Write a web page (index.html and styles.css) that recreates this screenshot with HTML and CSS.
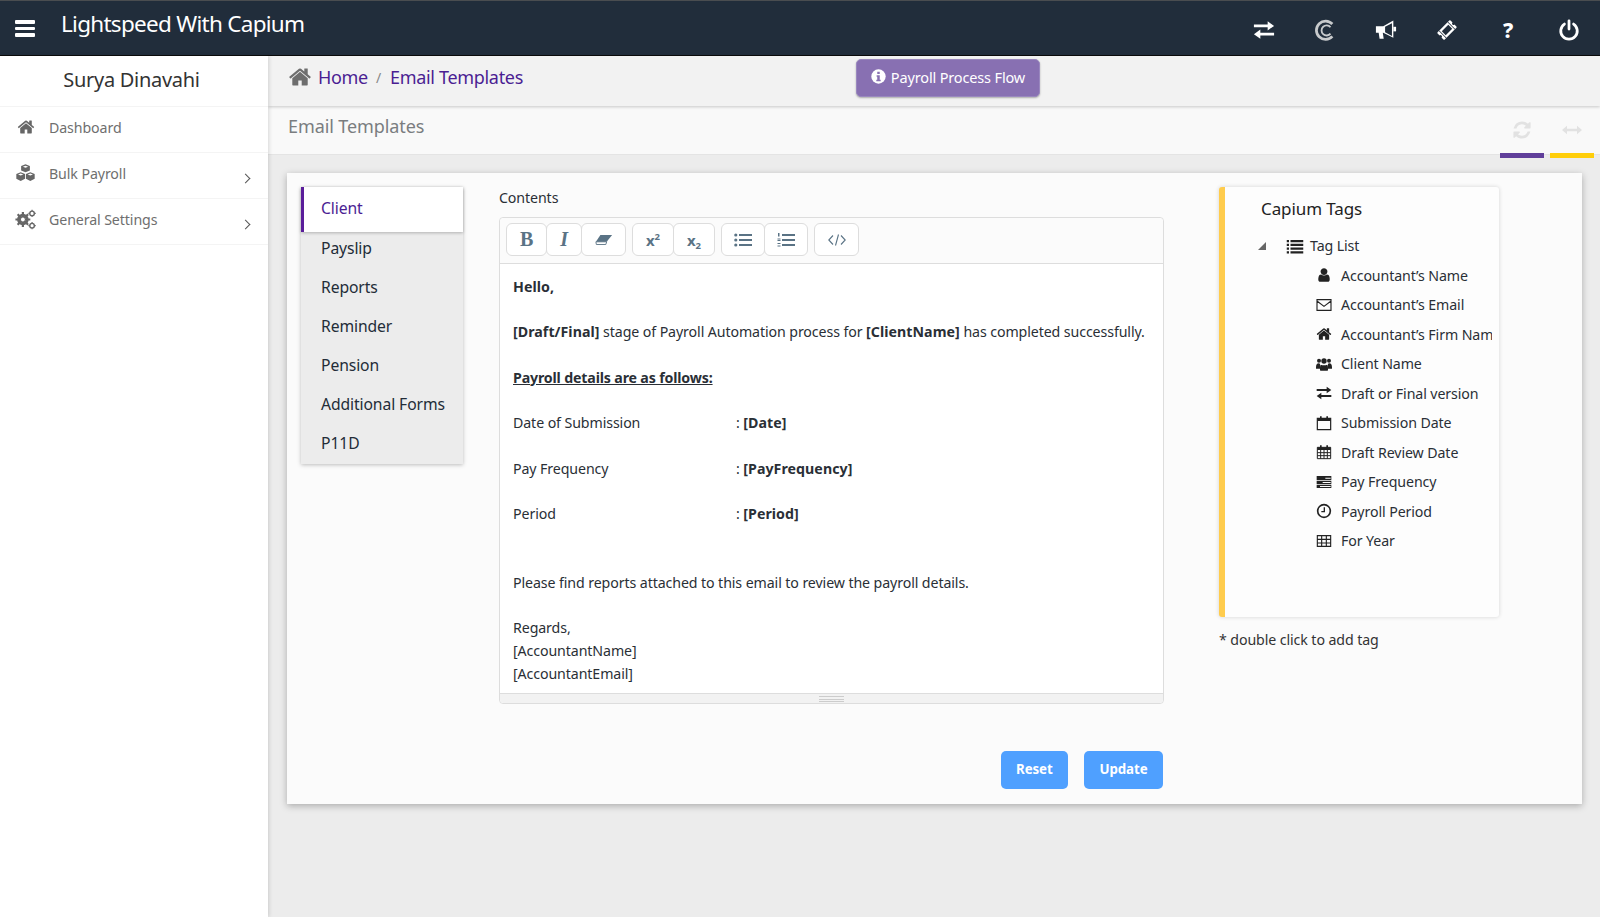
FILE: index.html
```html
<!DOCTYPE html>
<html lang="en">
<head>
<meta charset="utf-8">
<title>Email Templates</title>
<link rel="stylesheet" href="styles.css">
</head>
<body>
<svg class="sprite" xmlns="http://www.w3.org/2000/svg">
  <symbol id="home" viewBox="0 0 1792 1792"><path d="M1472 992v480q0 26-19 45t-45 19h-384v-384h-256v384h-384q-26 0-45-19t-19-45v-480q0-1 .5-3t.5-3l575-474 575 474q1 2 1 6zm223-69l-62 74q-8 9-21 11h-3q-13 0-21-7l-692-577-692 577q-12 8-24 7-13-2-21-11l-62-74q-8-10-7-23.500t11-21.500l719-599q32-26 76-26t76 26l244 204v-195q0-14 9-23t23-9h192q14 0 23 9t9 23v408l219 182q10 8 11 21.500t-7 23.500z"/></symbol>
  <symbol id="user" viewBox="0 0 1792 1792"><path d="M1536 1399q0 109-62.500 187t-150.500 78h-854q-88 0-150.500-78t-62.500-187q0-85 8.500-160.500t31.500-152 58.500-131 94-89 134.500-34.500q131 128 313 128t313-128q76 0 134.500 34.500t94 89 58.500 131 31.500 152 8.500 160.500zm-256-887q0 159-112.500 271.500t-271.500 112.500-271.500-112.500-112.500-271.500 112.500-271.500 271.500-112.500 271.500 112.500 112.500 271.500z"/></symbol>
  <symbol id="refresh" viewBox="0 0 1792 1792"><path d="M1639 1056q0 5-1 7-64 268-268 434.500t-478 166.500q-146 0-282.500-55t-243.500-157l-129 129q-19 19-45 19t-45-19-19-45v-448q0-26 19-45t45-19h448q26 0 45 19t19 45-19 45l-137 137q71 66 161 102t187 36q134 0 250-65t186-179q11-17 53-117 8-23 30-23h192q13 0 22.500 9.500t9.500 22.500zm25-800v448q0 26-19 45t-45 19h-448q-26 0-45-19t-19-45 19-45l138-138q-148-137-349-137-134 0-250 65t-186 179q-11 17-53 117-8 23-30 23h-199q-13 0-22.500-9.500t-9.500-22.500v-7q65-268 270-434.500t480-166.500q146 0 284 55.500t245 156.500l130-129q19-19 45-19t45 19 19 45z"/></symbol>
  <symbol id="exchange" viewBox="0 0 24 24"><path d="M1 6h15V2.500l7 5-7 5V9H1zM23 15H8v-3.500l-7 5 7 5V18h15z"/></symbol>
  <symbol id="cubes" viewBox="0 0 24 24"><path d="M12 1.500l5 2v5l-5 2-5-2v-5zM6.500 10.500l5 2v5.500l-5 2.500-5-2.500V12.500zM17.500 10.500l5 2v5.500l-5 2.500-5-2.500V12.500z"/><path fill="#fff" d="M12 3l3 1.200-3 1.200-3-1.200zM6.500 12l3 1.200-3 1.200-3-1.200zM17.500 12l3 1.200-3 1.200-3-1.200z"/></symbol>
  <symbol id="cogs" viewBox="0 0 24 24"><circle cx="9" cy="12" r="5" fill="none" stroke="currentColor" stroke-width="3.200"/><path stroke="currentColor" stroke-width="2.500" d="M9 3.500v17M.5 12h17M3 6l12 12M15 6L3 18"/><circle cx="9" cy="12" r="2.200" fill="#fff"/><circle cx="19.500" cy="5" r="2.600" fill="none" stroke="currentColor" stroke-width="1.600"/><path stroke="currentColor" stroke-width="1.300" d="M19.500 .8v1.500M19.500 7.700v1.500M15.300 5h1.500M22.200 5h1.500"/><circle cx="19.500" cy="19" r="2.600" fill="none" stroke="currentColor" stroke-width="1.600"/><path stroke="currentColor" stroke-width="1.300" d="M19.500 14.800v1.500M19.500 21.700v1.500M15.300 19h1.500M22.200 19h1.500"/></symbol>
  <symbol id="list" viewBox="0 0 24 24"><path d="M1 4h3v3H1zM6 4h17v3H6zM1 9h3v3H1zM6 9h17v3H6zM1 14h3v3H1zM6 14h17v3H6zM1 19h3v3H1zM6 19h17v3H6z"/></symbol>
</svg>

<header class="topbar">
  <div class="brand">
    <span class="burger"><i></i><i></i><i></i></span>
    <span class="brand-name">Lightspeed With Capium</span>
  </div>
  <nav class="top-icons">
    <svg class="ti" viewBox="0 0 24 24"><use href="#exchange"/></svg>
    <svg class="ti" viewBox="0 0 24 24"><path fill="none" stroke="#c8cacc" stroke-width="3" d="M20 5.500A10 10 0 1 0 20 19"/><path fill="none" stroke="#c8cacc" stroke-width="2" d="M18 9a5.500 5.500 0 1 0 0 7"/></svg>
    <svg class="ti" viewBox="0 0 24 24"><path d="M1 8h8l11-6.500v19L9 15H8.500l1 6.500H5L4 15H1z"/><path fill="#212d3b" d="M11 8.500l7.500-4v14l-7.500-4z"/><path d="M20 8.500h3v5h-3z"/></svg>
    <svg class="ti" viewBox="0 0 24 24"><g transform="rotate(-45 12 12)"><rect x="2" y="6.500" width="20" height="11" rx="1" fill="#fff"/><rect x="7" y="9" width="10" height="6" fill="#212d3b"/><circle cx="2" cy="12" r="1.600" fill="#212d3b"/><circle cx="22" cy="12" r="1.600" fill="#212d3b"/><rect x="4.900" y="6.500" width=".8" height="11" fill="#212d3b"/><rect x="18.300" y="6.500" width=".8" height="11" fill="#212d3b"/></g></svg>
    <span class="ti ti-q">?</span>
    <svg class="ti" viewBox="0 0 24 24"><path fill="none" stroke="#fff" stroke-width="3" stroke-linecap="round" d="M7 5.500a9 9 0 1 0 10 0M12 2v9"/></svg>
  </nav>
</header>

<div class="shell">
  <aside class="sidebar">
    <div class="user-name">Surya Dinavahi</div>
    <a class="nav-item"><svg class="nav-ic nav-home"><use href="#home"/></svg><span>Dashboard</span></a>
    <a class="nav-item"><svg class="nav-ic"><use href="#cubes"/></svg><span>Bulk Payroll</span><b class="chev"></b></a>
    <a class="nav-item"><svg class="nav-ic"><use href="#cogs"/></svg><span>General Settings</span><b class="chev"></b></a>
  </aside>

  <main class="main">
    <div class="crumbs">
      <svg class="crumb-home"><use href="#home"/></svg>
      <a class="crumb">Home</a><span class="sep">/</span><a class="crumb">Email Templates</a>
      <button class="flow-btn"><svg class="info" viewBox="0 0 24 24"><circle cx="12" cy="12" r="11.500" fill="#fff"/><path fill="#8870b2" d="M10 4.500h4v3.500h-4zM9 10h5v7h1.500v2.500h-7V17H10v-4.500H9z"/></svg>Payroll Process Flow</button>
    </div>
    <div class="title-bar">
      <h1 class="page-title">Email Templates</h1>
      <div class="tools">
        <div class="tool"><svg class="tool-ic"><use href="#refresh"/></svg><i class="tool-bar purple"></i></div>
        <div class="tool"><svg class="tool-ic" viewBox="0 0 24 24"><path d="M0 12l6-5v3.500h12V7l6 5-6 5v-3.500H6V17z"/></svg><i class="tool-bar yellow"></i></div>
      </div>
    </div>

    <section class="card">
      <ul class="tabs">
        <li class="tab active">Client</li>
        <li class="tab">Payslip</li>
        <li class="tab">Reports</li>
        <li class="tab">Reminder</li>
        <li class="tab">Pension</li>
        <li class="tab">Additional Forms</li>
        <li class="tab">P11D</li>
      </ul>

      <div class="editor-col">
        <label class="contents-label">Contents</label>
        <div class="editor">
          <div class="toolbar">
            <div class="btn-group">
              <button class="tb tb-b">B</button>
              <button class="tb tb-i">I</button>
              <button class="tb tb-e"><svg viewBox="0 0 20 12" class="tb-ic"><path d="M6 .5h13L13 8H1z"/><path fill="none" stroke="currentColor" d="M1 8h12l-1 3H1.500z"/></svg></button>
            </div>
            <div class="btn-group">
              <button class="tb tb-sup">x<sup>2</sup></button>
              <button class="tb tb-sub">x<sub>2</sub></button>
            </div>
            <div class="btn-group">
              <button class="tb tb-ul"><svg viewBox="0 0 18 14" class="tb-ic"><path d="M5 1h13v2H5zM5 6h13v2H5zM5 11h13v2H5z"/><circle cx="1.800" cy="2" r="1.600"/><circle cx="1.800" cy="7" r="1.600"/><circle cx="1.800" cy="12" r="1.600"/></svg></button>
              <button class="tb tb-ol"><svg viewBox="0 0 18 14" class="tb-ic"><path d="M5 1h13v2H5zM5 6h13v2H5zM5 11h13v2H5z"/><path d="M1 0h1.500v3.500H1zM.5 5.500h3v1H.5zM.5 7h3v1h-3zM.5 10h3v1h-3zM.5 12.500h3v1h-3z"/></svg></button>
            </div>
            <div class="btn-group">
              <button class="tb tb-code"><svg viewBox="0 0 18 12" class="tb-ic"><path fill="none" stroke="currentColor" stroke-width="1.100" d="M5 1.500L.8 6 5 10.500M13 1.500L17.200 6 13 10.500M10.500 .5L7.500 11.500"/></svg></button>
            </div>
          </div>
          <div class="editor-body">
            <p class="line"><strong>Hello,</strong></p>
            <p class="line blank"></p>
            <p class="line"><strong>[Draft/Final]</strong> stage of Payroll Automation process for <strong>[ClientName]</strong> has completed successfully.</p>
            <p class="line blank"></p>
            <p class="line"><strong class="tight"><u>Payroll details are as follows:</u></strong></p>
            <p class="line blank"></p>
            <p class="line kv"><span>Date of Submission</span><span>: <strong>[Date]</strong></span></p>
            <p class="line blank"></p>
            <p class="line kv"><span>Pay Frequency</span><span>: <strong>[PayFrequency]</strong></span></p>
            <p class="line blank"></p>
            <p class="line kv"><span>Period</span><span>: <strong>[Period]</strong></span></p>
            <p class="line blank"></p>
            <p class="line blank"></p>
            <p class="line">Please find reports attached to this email to review the payroll details.</p>
            <p class="line blank"></p>
            <p class="line">Regards,</p>
            <p class="line">[AccountantName]</p>
            <p class="line">[AccountantEmail]</p>
          </div>
          <div class="statusbar"><i class="grip"></i></div>
        </div>
        <div class="actions">
          <button class="act">Reset</button>
          <button class="act">Update</button>
        </div>
      </div>

      <div class="tags-col">
        <div class="tags">
          <h2 class="tags-title">Capium Tags</h2>
          <div class="tree-root"><i class="caret"></i><svg class="root-ic"><use href="#list"/></svg><span>Tag List</span></div>
          <ul class="tag-list">
            <li><svg class="tag-ic"><use href="#user"/></svg><span>Accountant’s Name</span></li>
            <li><svg class="tag-ic" viewBox="0 0 24 18"><path fill="none" stroke="currentColor" stroke-width="1.700" d="M1.500 1h21v16h-21zM1.500 3l10.500 8 10.500-8"/></svg><span>Accountant’s Email</span></li>
            <li><svg class="tag-ic"><use href="#home"/></svg><span>Accountant’s Firm Name</span></li>
            <li><svg class="tag-ic" viewBox="0 0 24 24"><circle cx="4.500" cy="7" r="3"/><circle cx="19.500" cy="7" r="3"/><circle cx="12" cy="7.500" r="4"/><path d="M0 17c0-4 1.500-6 4-6l2 .5V19H0zM24 17c0-4-1.500-6-4-6l-2 .5V19h6zM7 13q5 2 10 0 1 1 1 5v3q0 1-1 1H7q-1 0-1-1v-3q0-4 1-5z"/></svg><span>Client Name</span></li>
            <li><svg class="tag-ic" viewBox="0 0 24 24"><use href="#exchange"/></svg><span>Draft or Final version</span></li>
            <li><svg class="tag-ic" viewBox="0 0 24 24"><path fill="none" stroke="currentColor" stroke-width="1.800" d="M2 5h20v17H2z"/><path d="M2 5h20v4H2zM6 2h2.500v5H6zM15.500 2H18v5h-2.500z"/></svg><span>Submission Date</span></li>
            <li><svg class="tag-ic" viewBox="0 0 24 24"><path fill="none" stroke="currentColor" stroke-width="1.500" d="M2 5h20v17H2zM2 13h20M2 17.500h20M7 9v13M12 9v13M17 9v13"/><path d="M2 5h20v4H2zM6 2h2.500v5H6zM15.500 2H18v5h-2.500z"/></svg><span>Draft Review Date</span></li>
            <li><svg class="tag-ic" viewBox="0 0 24 24"><path d="M1 3h22v6H1zM1 10h22v5H1zM1 16h22v5H1z"/><path fill="#fcfcfc" d="M14 5.500h8v1.500h-8zM10 12h12v1.500H10zM6 18h16v1.500H6z"/></svg><span>Pay Frequency</span></li>
            <li><svg class="tag-ic" viewBox="0 0 24 24"><circle cx="12" cy="12" r="9.500" fill="none" stroke="currentColor" stroke-width="2.500"/><path fill="none" stroke="currentColor" stroke-width="2" d="M12.500 6.500V13H8"/></svg><span>Payroll Period</span></li>
            <li><svg class="tag-ic" viewBox="0 0 24 24"><path fill="none" stroke="currentColor" stroke-width="1.700" d="M2 4h20v16H2zM2 9.500h20M2 15h20M8.500 4v16M15.500 4v16"/></svg><span>For Year</span></li>
          </ul>
        </div>
        <p class="hint">* double click to add tag</p>
      </div>
    </section>
  </main>
</div>
</body>
</html>
```
FILE: styles.css
```css
* { box-sizing: border-box; }
html, body { margin: 0; height: 100%; }
body {
  height: 917px;
  overflow: hidden;
  font-family: "Noto Sans", "Open Sans", sans-serif;
  font-size: 14.2px;
  letter-spacing: -.1px;
  color: #2a2f36;
  background: #ececec;
  display: flex;
  flex-direction: column;
}
strong { letter-spacing: .05px; }
strong.tight { letter-spacing: -.16px; }
.sprite { display: none; }
svg { fill: currentColor; display: block; }
ul { list-style: none; margin: 0; padding: 0; }
button { font-family: inherit; letter-spacing: inherit; cursor: pointer; }

/* top bar */
.topbar {
  height: 56px;
  flex: none;
  background: #212d3b;
  border-top: 1px solid #4a4d50;
  border-bottom: 1px solid #0b0b0b;
  display: flex;
  justify-content: space-between;
  color: #fff;
}
.brand { display: flex; align-items: flex-start; }
.burger { width: 20px; margin: 19px 0 0 15px; display: flex; flex-direction: column; gap: 3px; }
.burger i { height: 3.500px; background: #fff; border-radius: 1px; }
.brand-name { margin: 6px 0 0 26px; font-size: 22.500px; line-height: 34px; letter-spacing: -.72px; }
.top-icons { display: flex; gap: 39px; align-items: center; padding: 4px 20px 0 0; }
.ti { width: 22px; height: 22px; color: #fff; }
.ti-q { font-weight: 800; font-size: 21px; line-height: 22px; text-align: center; }

.shell { flex: 1; display: flex; min-height: 0; }

/* sidebar */
.sidebar { width: 268px; flex: none; background: #fff; box-shadow: 1px 0 4px rgba(0,0,0,.14); z-index: 2; }
.user-name { height: 51px; display: flex; align-items: center; justify-content: center; font-size: 20px; color: #333; padding-bottom: 3px; letter-spacing: -.3px; padding-right: 5px; border-bottom: 1px solid #f4f4f4; }
.nav-item { height: 46px; padding: 0 0 5px 15px; display: flex; align-items: center; color: #6f6f6f; border-bottom: 1px solid #f4f4f4; }
.nav-ic { width: 21px; height: 21px; margin-right: 13px; color: #666; }
.nav-home { width: 18px; height: 18px; margin: 0 14px 0 2px; }
.chev { width: 7px; height: 7px; margin-left: auto; margin-right: 19px; margin-top: 10px; border-top: 1.500px solid #555; border-right: 1.500px solid #555; transform: rotate(45deg); }

/* main */
.main { flex: 1; min-width: 0; display: flex; flex-direction: column; }
.crumbs { height: 50px; flex: none; padding: 0 0 8px 20px; background: #f2f2f2; display: flex; align-items: center; box-shadow: 0 1px 3px rgba(0,0,0,.2); position: relative; z-index: 1; }
.crumb-home { width: 24px; height: 24px; color: #6e6e6e; margin-right: 6px; }
.crumb { color: #4b1e93; font-size: 18px; letter-spacing: -.32px; }
.sep { color: #888; margin: 0 9px 0 8px; font-size: 14px; }
.flow-btn { margin-left: 333px; width: 184px; height: 38px; align-self: flex-start; margin-top: 3px; border: 1px solid #9a88bf; border-radius: 5px; background: #8870b2; color: #fff; font-size: 14.500px; letter-spacing: -.15px; display: flex; align-items: center; justify-content: center; gap: 5px; box-shadow: 0 1px 2px rgba(0,0,0,.3); padding: 0 0 3px; }
.info { width: 15px; height: 15px; }

.title-bar { height: 49px; flex: none; background: #f9f9f9; border-bottom: 1px solid #e4e4e4; display: flex; justify-content: space-between; padding-left: 20px; }
.page-title { margin: 0; font-size: 18px; font-weight: 400; line-height: 40px; color: #7a7d80; letter-spacing: -.1px; }
.tools { display: flex; gap: 6px; padding-right: 6px; }
.tool { width: 44px; display: flex; flex-direction: column; align-items: center; }
.tool-ic { width: 20px; height: 20px; margin-top: 14px; color: #e2e2e2; }
.tool-bar { margin-top: auto; height: 5px; width: 44px; margin-bottom: -4px; position: relative; z-index: 1; }
.purple { background: #603f9a; }
.yellow { background: #ffce0a; }

/* card */
.card { margin: 18px 18px 0 19px; height: 631px; background: #fbfbfb; box-shadow: 0 2px 7px rgba(0,0,0,.28); display: flex; align-items: flex-start; padding: 14px 0 0 14px; }
.tabs { width: 162px; height: 277px; flex: none; background: #ececec; box-shadow: 0 1px 4px rgba(0,0,0,.25); }
.tab { height: 39px; padding: 0 0 7px 20px; display: flex; align-items: center; font-size: 15.700px; letter-spacing: -.1px; color: #232c38; }
.tab.active { height: 45px; background: #fff; color: #4b1e93; border-left: 3px solid #5a1d9a; padding: 0 0 3px 17px; box-shadow: 0 1px 3px rgba(0,0,0,.25); position: relative; }

.editor-col { width: 665px; margin-left: 36px; flex: none; }
.contents-label { display: block; height: 30px; line-height: 20px; margin-top: -1px; padding-top: 2px; }
.editor { border: 1px solid #ddd; border-radius: 4px; height: 487px; margin-top: 1px; background: #fff; display: flex; flex-direction: column; }
.toolbar { height: 46px; flex: none; background: #fbfbfb; border-bottom: 1px solid #ddd; padding: 5px 0 0 6px; display: flex; gap: 6px; border-radius: 4px 4px 0 0; }
.btn-group { display: flex; }
.tb { height: 33px; border: 1px solid #ddd; border-radius: 6px; background: #fff; color: #5a7385; padding: 0; display: flex; align-items: center; justify-content: center; }
.btn-group .tb + .tb { margin-left: -1px; }
.tb-b { width: 41px; font-family: "Liberation Serif", serif; font-weight: 700; font-size: 20px; }
.tb-i { width: 36px; font-family: "Liberation Serif", serif; font-style: italic; font-weight: 700; font-size: 20px; }
.tb-e { width: 45px; }
.tb-sup, .tb-sub { display: block; font-size: 15px; font-weight: 700; width: 42px; }
.tb-sup sup { font-size: 9.500px; line-height: 0; vertical-align: 6px; }
.tb-sub sub { font-size: 9.500px; line-height: 0; vertical-align: -3px; }
.tb-ul { width: 44px; }
.tb-ol { width: 44px; }
.tb-code { width: 45px; }
.tb-ic { width: 18px; height: 14px; }
.editor-body { flex: 1; padding: 11.500px 13px 0; overflow: hidden; }
.line { margin: 0; height: 22.800px; line-height: 22.800px; white-space: nowrap; }
.kv { display: grid; grid-template-columns: 223px 1fr; }
.statusbar { height: 10px; flex: none; background: #f2f2f2; border-top: 1px solid #ddd; display: flex; justify-content: center; padding-top: 2px; border-radius: 0 0 4px 4px; }
.grip { width: 25px; height: 6px; border-top: 1px solid #ccc; border-bottom: 1px solid #ccc; background: linear-gradient(#ccc,#ccc) center/100% 1px no-repeat; }
.actions { display: flex; justify-content: flex-end; gap: 16px; margin: 47px 1px 0 0; }
.act { height: 38px; padding: 0 15.500px 2px; background: #4fa0ff; border: none; border-radius: 5px; color: #fff; font-weight: 700; font-size: 13.300px; }

.tags-col { width: 280px; flex: none; margin-left: 55px; margin-top: 0; }
.tags { height: 430px; background: #fdfdfd; border-left: 6px solid #ffcc4d; border-radius: 3px; box-shadow: 0 0 4px rgba(0,0,0,.16); padding: 0 7px 0 36px; overflow: hidden; }
.tags-title { margin: 0; height: 46px; line-height: 44px; font-size: 17px; font-weight: 400; color: #222; letter-spacing: -.1px; }
.tree-root { display: flex; align-items: center; height: 29.600px; margin: -2px 0 0 -3px; }
.caret { width: 0; height: 0; border-left: 8px solid transparent; border-bottom: 8px solid #666; margin-right: 20px; }
.root-ic { width: 18px; height: 18px; margin-right: 6px; color: #222; }
.tag-list { overflow: hidden; }
.tag-list li { height: 29.500px; display: flex; align-items: center; padding-left: 55px; white-space: nowrap; color: #2a2f36; }
.tag-ic { width: 16px; height: 16px; margin-right: 9px; flex: none; color: #222; }
.hint { margin: 13px 0 0; color: #333; }
```
